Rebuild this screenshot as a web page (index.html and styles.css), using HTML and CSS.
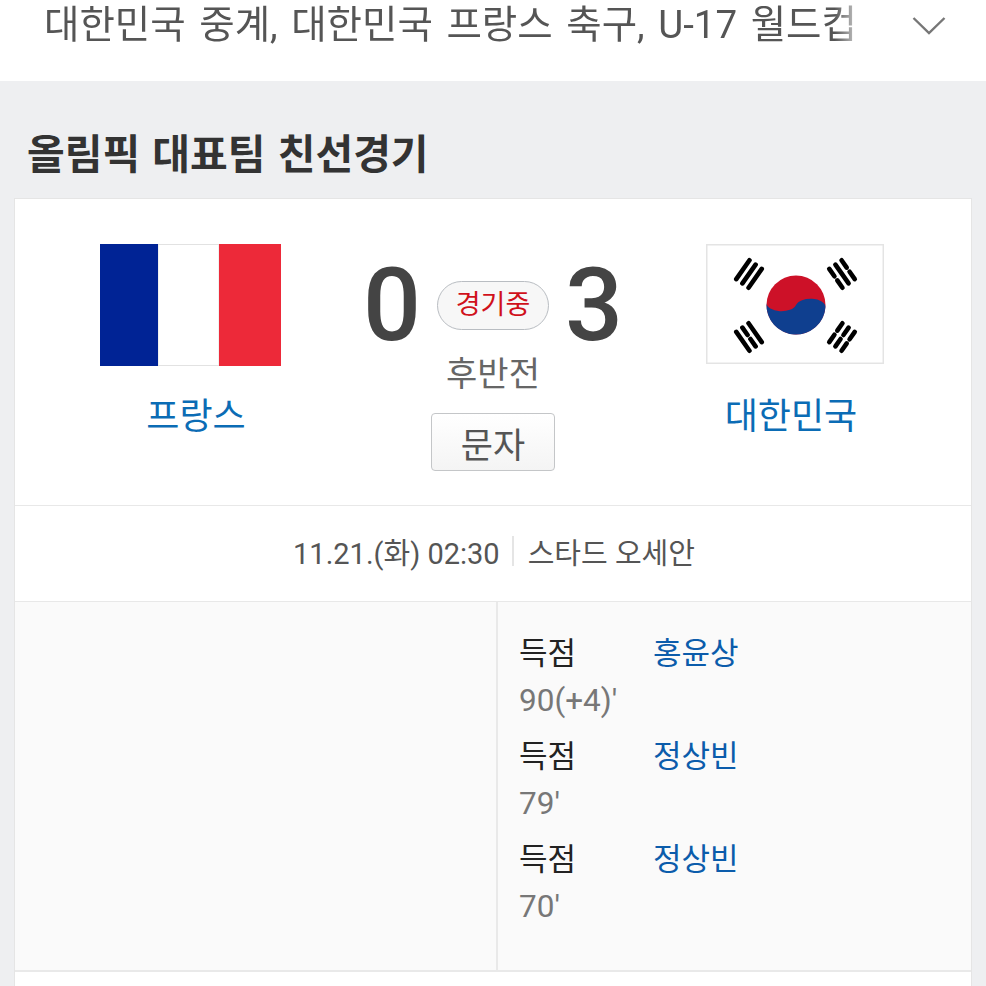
FILE: index.html
```html
<!DOCTYPE html>
<html lang="ko">
<head>
    <meta charset="UTF-8">
    <meta name="viewport" content="width=device-width, initial-scale=1.0">
    <title>올림픽 대표팀 친선경기</title>
    <link rel="stylesheet" href="styles.css">
</head>
<body>
    <div class="topbar">
        <div class="keywords">대한민국 중계, 대한민국 프랑스 축구, U-17 월드컵</div>
        <svg class="chevron" width="34" height="20" viewBox="0 0 34 20">
            <path d="M1.5 2 L17 17 L32.5 2" fill="none" stroke="#777" stroke-width="2.4"/>
        </svg>
    </div>

    <h1 class="title">올림픽 대표팀 친선경기</h1>

    <div class="card">
        <div class="match">
            <div class="team team-home">
                <svg class="flag" width="181" height="122" viewBox="0 0 181 122">
                    <rect width="181" height="122" fill="#fff"/>
                    <rect x="58" y="0.5" width="61" height="121" fill="#fff" stroke="#e2e2e2"/>
                    <rect width="58" height="122" fill="#002395"/>
                    <rect x="119" width="62" height="122" fill="#ed2939"/>
                </svg>
                <a class="team-name">프랑스</a>
            </div>

            <div class="center">
                <div class="score-row">
                    <span class="score">0</span>
                    <span class="status">경기중</span>
                    <span class="score">3</span>
                </div>
                <div class="period">후반전</div>
                <button class="sms">문자</button>
            </div>

            <div class="team team-away">
                <svg class="flag" width="178" height="120" viewBox="0 0 178 120">
                    <rect x="0.75" y="0.75" width="176.5" height="118.5" fill="#fff" stroke="#e4e4e4" stroke-width="1.5"/>
                    <!-- taegeuk -->
                    <circle cx="90" cy="61" r="29.5" fill="#cd1128"/>
                    <path d="M60.5 59 A15 8.5 0 0 0 90 61 A15 8.5 0 0 1 119.5 63 A29.5 29.5 0 0 1 60.5 59 Z" fill="#0f3f8f"/>
                    <!-- trigrams -->
                    <g stroke="#000" stroke-width="4.6" stroke-linecap="round">
                        <g transform="translate(43 30) rotate(-55)">
                            <path d="M-11.5 -7.5H11.5M-11.5 0H11.5M-11.5 7.5H11.5"/>
                        </g>
                        <g transform="translate(136 30) rotate(55)">
                            <path d="M-11.5 -7.5H-2.5M2.5 -7.5H11.5M-11.5 0H11.5M-11.5 7.5H-2.5M2.5 7.5H11.5"/>
                        </g>
                        <g transform="translate(43 93) rotate(55)">
                            <path d="M-11.5 -7.5H11.5M-11.5 0H-2.5M2.5 0H11.5M-11.5 7.5H11.5"/>
                        </g>
                        <g transform="translate(136 93) rotate(-55)">
                            <path d="M-11.5 -7.5H-2.5M2.5 -7.5H11.5M-11.5 0H-2.5M2.5 0H11.5M-11.5 7.5H-2.5M2.5 7.5H11.5"/>
                        </g>
                    </g>
                </svg>
                <a class="team-name">대한민국</a>
            </div>
        </div>

        <div class="info">
            <span>11.21.(화) 02:30</span>
            <span class="info-sep"></span>
            <span>스타드 오세안</span>
        </div>

        <div class="events">
            <div class="events-col"></div>
            <div class="events-col events-away">
                <div class="goal">
                    <div class="goal-line"><span class="goal-type">득점</span><a class="goal-player">홍윤상</a></div>
                    <div class="goal-time">90(+4)'</div>
                </div>
                <div class="goal">
                    <div class="goal-line"><span class="goal-type">득점</span><a class="goal-player">정상빈</a></div>
                    <div class="goal-time">79'</div>
                </div>
                <div class="goal">
                    <div class="goal-line"><span class="goal-type">득점</span><a class="goal-player">정상빈</a></div>
                    <div class="goal-time">70'</div>
                </div>
            </div>
        </div>
    </div>
</body>
</html>
```

FILE: styles.css
```css
/* Page */
html, body {
    height: 986px;
    overflow: hidden;
}

body {
    margin: 0;
    padding: 0;
    background-color: #eeeff1;
    font-family: Roboto, "Noto Sans CJK KR", sans-serif;
    color: #444;
}

/* Related keywords bar */
.topbar {
    display: flex;
    align-items: flex-start;
    height: 81px;
    background-color: #fff;
    padding-left: 44px;
}

.keywords {
    width: 815px;
    margin-top: 2px;
    font-size: 38.5px;
    word-spacing: 4px;
    line-height: 46px;
    color: #555;
    white-space: nowrap;
    -webkit-mask-image: linear-gradient(to right, #000 97%, rgba(0, 0, 0, 0.25));
    mask-image: linear-gradient(to right, #000 97%, rgba(0, 0, 0, 0.25));
}

.chevron {
    margin: 16px 0 0 53px;
}

/* Section heading */
.title {
    margin: 0;
    padding: 46px 0 0 27px;
    height: 71px;
    font-size: 41px;
    word-spacing: 2px;
    line-height: 56px;
    font-weight: 700;
    color: #333;
}

/* Match card */
.card {
    box-sizing: border-box;
    margin-left: 14px;
    width: 958px;
    height: 788px;
    background-color: #fff;
    border: 1px solid #e5e5e5;
    border-bottom: 0;
}

.match {
    display: flex;
    height: 306px;
    border-bottom: 1px solid #e8e8e8;
}

.team {
    display: flex;
    flex-direction: column;
    align-items: center;
    padding-top: 45px;
    box-sizing: border-box;
}

.team-home {
    width: 346px;
    padding-left: 4px;
}

.team-away {
    width: 346px;
    padding-right: 6px;
}

.flag {
    display: block;
}

.team-name {
    font-size: 36px;
    line-height: 50px;
    color: #0b6cb5;
}

.team-home .team-name {
    margin: 26px 0 0 12px;
}

.team-away .team-name {
    margin: 28px 8px 0 0;
}

.center {
    width: 264px;
    display: flex;
    flex-direction: column;
    align-items: center;
}

.score-row {
    display: flex;
    align-items: center;
    gap: 16px;
    height: 134px;
    margin-top: 39px;
}

.score {
    font-size: 102px;
    line-height: 134px;
    font-weight: 500;
    color: #444;
}

.status {
    width: 110px;
    height: 47px;
    border: 1px solid #b9bdc2;
    border-radius: 25px;
    background-color: #f7f7f7;
    text-align: center;
    font-size: 27px;
    line-height: 47px;
    color: #d0111b;
}

.period {
    margin-top: -23px;
    font-size: 34px;
    line-height: 50px;
    color: #666;
}

.sms {
    width: 124px;
    height: 58px;
    margin-top: 14px;
    padding: 0;
    border: 1px solid #c4c6c8;
    border-radius: 4px;
    background: linear-gradient(#fff, #f4f4f4);
    font-family: inherit;
    font-size: 35px;
    color: #555;
}

/* Date and stadium */
.info {
    display: flex;
    justify-content: center;
    align-items: center;
    gap: 14px;
    box-sizing: border-box;
    height: 96px;
    padding: 0 0 6px 2px;
    border-bottom: 1px solid #e8e8e8;
    font-size: 29px;
    color: #555;
}

.info-sep {
    width: 2px;
    height: 30px;
    margin-left: -2px;
    background-color: #e5e5e5;
}

/* Goal list */
.events {
    display: flex;
    height: 368px;
    background-color: #fafafa;
    border-bottom: 2px solid #e9e9e9;
}

.events-col {
    width: 481px;
    border-right: 2px solid #e9e9e9;
}

.events-away {
    flex: 1;
    width: auto;
    border-right: 0;
    padding: 28px 0 0 21px;
}

.goal {
    height: 103px;
    font-size: 31px;
    line-height: 48px;
}

.goal-line {
    display: flex;
}

.goal-type {
    width: 134px;
    color: #222;
}

.goal-player {
    color: #0b5cab;
}

.goal-time {
    margin-top: -1.5px;
    font-size: 31.5px;
    color: #777;
}
```
